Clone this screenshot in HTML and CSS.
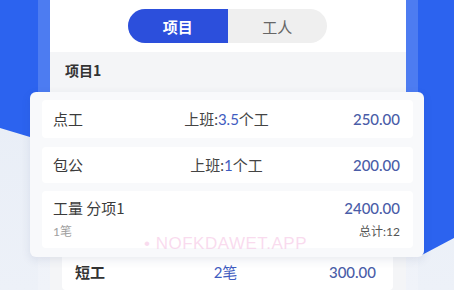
FILE: index.html
```html
<!DOCTYPE html>
<html lang="zh">
<head>
<meta charset="utf-8">
<title>项目</title>
<link rel="stylesheet" href="styles.css">
</head>
<body>
<div class="backdrop"></div>
<div class="stage">
  <div class="phone">
    <div class="screen">
      <div class="top">
        <div class="segment">
          <div class="seg seg-active">项目</div>
          <div class="seg">工人</div>
        </div>
      </div>
      <div class="group-title">项目1</div>
      <div class="list">
        <div class="list-row">
          <span class="name">短工</span>
          <span class="mid accent">2笔</span>
          <span class="amount">300.00</span>
        </div>
      </div>
    </div>
  </div>
</div>

<div class="card">
  <div class="row">
    <span class="name">点工</span>
    <span class="mid">上班:<em class="accent">3.5</em>个工</span>
    <span class="amount">250.00</span>
  </div>
  <div class="row row-2">
    <span class="name">包公</span>
    <span class="mid">上班:<em class="accent">1</em>个工</span>
    <span class="amount">200.00</span>
  </div>
  <div class="row row-tall">
    <div class="stack">
      <span class="name">工量 分项1</span>
      <span class="sub">1笔</span>
    </div>
    <div class="stack stack-right">
      <span class="amount">2400.00</span>
      <span class="sub sub-dark">总计:12</span>
    </div>
  </div>
</div>

<div class="watermark">• NOFKDAWET.APP</div>
</body>
</html>
```
FILE: styles.css
```css
* { box-sizing: border-box; }

html, body {
  margin: 0;
  padding: 0;
}

body {
  width: 454px;
  height: 290px;
  overflow: hidden;
  position: relative;
  background: linear-gradient(180deg, #e6ecf6 0%, #edf1f8 100%);
  font-family: "Lato", "Noto Sans CJK SC", sans-serif;
  color: #3b3b3b;
}

.backdrop {
  position: absolute;
  inset: 0;
  background: #2c63ef;
  clip-path: polygon(0 0, 454px 0, 454px 238px, 420px 256px, 40px 140px, 0 128px);
}

.stage {
  position: relative;
  display: flex;
  padding-left: 38px;
}

.phone {
  width: 380px;
  height: 290px;
  padding: 0 12px;
  background: rgba(255, 255, 255, 0.16);
}

.screen {
  height: 290px;
  background: #f4f5f7;
  display: flex;
  flex-direction: column;
}

.top {
  height: 60px;
  background: #ffffff;
  display: flex;
  justify-content: center;
  padding-top: 9px;
  padding-right: 1px;
}

.segment {
  display: flex;
  width: 199px;
  height: 34px;
  border-radius: 17px;
  overflow: hidden;
  background: #efefef;
}

.seg {
  flex: 1;
  display: flex;
  align-items: center;
  justify-content: center;
  font-size: 15px;
  color: #666666;
  font-family: "Noto Sans CJK SC", sans-serif;
}

.seg-active {
  background: #2c4fdc;
  color: #ffffff;
  font-weight: 700;
}

.group-title {
  height: 32px;
  padding: 9px 15px 0;
  font-size: 14px;
  line-height: 18px;
  font-weight: 700;
  color: #333333;
  font-family: "Noto Sans CJK SC", sans-serif;
}

.list {
  margin-top: 173px;
  padding: 0 13px 0 12px;
}

.list-row {
  height: 36px;
  background: #ffffff;
  border-radius: 4px;
  display: grid;
  grid-template-columns: 1fr auto 1fr;
  align-items: center;
  padding: 0 17px 0 13px;
  font-size: 15px;
}

.list-row .name {
  font-weight: 700;
  color: #333;
}

.card {
  position: absolute;
  left: 30px;
  top: 92px;
  width: 394px;
  height: 165px;
  background: #f8f9fb;
  border-radius: 6px;
  box-shadow: 0 3px 10px rgba(40, 60, 110, 0.10);
  padding: 8px 11px 9px 12px;
  display: flex;
  flex-direction: column;
  gap: 8px;
}

.row {
  height: 38px;
  background: #ffffff;
  border-radius: 4px;
  display: grid;
  grid-template-columns: 1fr auto 1fr;
  align-items: center;
  padding: 0 13px 0 11px;
  font-size: 15px;
}

.row-2 {
  height: 36px;
  margin-top: 1px;
}

.row-tall {
  height: 57px;
  display: flex;
  justify-content: space-between;
  align-items: flex-start;
  padding-top: 8px;
}

.stack {
  display: flex;
  flex-direction: column;
  gap: 6px;
}

.stack-right {
  align-items: flex-end;
}

.name {
  color: #3b3b3b;
  font-family: "Noto Sans CJK SC", sans-serif;
  line-height: 18px;
}

.mid {
  color: #444444;
  font-family: "Lato", "Noto Sans CJK SC", sans-serif;
  line-height: 18px;
}

.mid em {
  font-style: normal;
}

.accent {
  color: #3f5cc0;
}

.amount {
  justify-self: end;
  color: #4a5da8;
  font-size: 15px;
  line-height: 18px;
  font-weight: 500;
}

.sub {
  font-size: 12px;
  line-height: 18px;
  color: #a0a0a0;
}

.sub-dark {
  color: #555555;
}

.watermark {
  position: absolute;
  left: 144px;
  top: 234px;
  font-size: 17px;
  letter-spacing: 0.5px;
  color: rgba(246, 196, 228, 0.6);
  font-family: "Liberation Sans", sans-serif;
}
```
